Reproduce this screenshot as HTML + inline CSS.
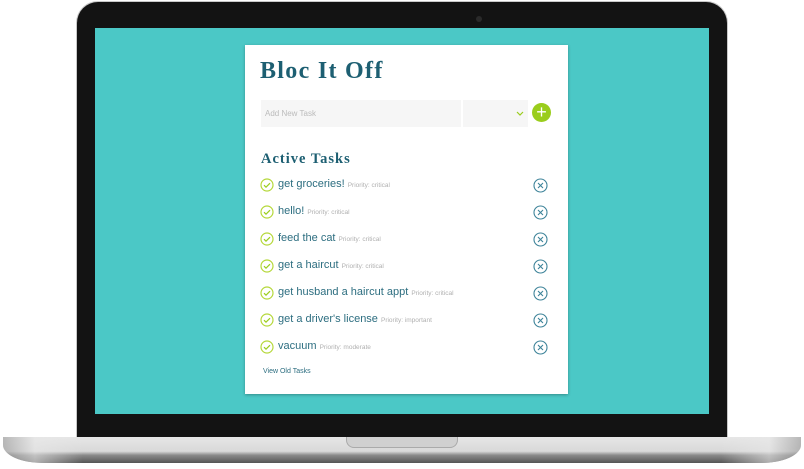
<!DOCTYPE html><html><head><style>
*{margin:0;padding:0;box-sizing:border-box}
body{width:804px;height:469px;background:#fff;position:relative;overflow:hidden;font-family:"Liberation Sans",sans-serif}
.bez{position:absolute;left:76px;top:1px;width:652px;height:440px;background:#131313;border-radius:22px 22px 0 0;border:1px solid #c8c8c8;border-bottom:none}
.scr{position:absolute;left:95px;top:28px;width:614px;height:386px;background:#4bc8c6}
.cam{position:absolute;left:399px;top:14px;width:6px;height:6px;border-radius:50%;background:#2a2a2a}
.base{position:absolute;left:3px;top:437px;width:798px;height:26px;border-radius:0 0 40px 40px/0 0 18px 18px;background:linear-gradient(#e6e6e6 0,#d9d9d9 55%,#8a8a8a 70%,#555 100%)}
.base:before{content:"";position:absolute;left:0;right:0;top:0;height:100%;border-radius:inherit;background:linear-gradient(90deg,#999 0,#e8e8e8 4%,transparent 10%,transparent 90%,#e8e8e8 96%,#999 100%);opacity:.6}
.notch{position:absolute;left:346px;top:437px;width:112px;height:11px;background:#d0d0d0;border-radius:0 0 8px 8px;border:1px solid #aaa;border-top:none}
.card{position:absolute;left:245px;top:45px;width:323px;height:349px;background:#fff;box-shadow:0 1px 3px rgba(0,0,0,.3)}
h1{position:absolute;left:15px;top:13px;font-family:"Liberation Serif",serif;font-size:24px;color:#1d5f72;font-weight:bold;letter-spacing:1.3px}
.in{position:absolute;left:16px;top:55px;width:200px;height:27px;background:#f6f6f6;font-size:8px;color:#bbb;padding:9px 4px}
.sel{position:absolute;left:218px;top:55px;width:65px;height:27px;background:#f6f6f6}
.sel svg{position:absolute;right:4px;top:11px}
.plus{position:absolute;left:287px;top:58px;width:19px;height:19px;border-radius:50%;background:#9acd1c;color:#fff;font-size:18px;line-height:18px;text-align:center}
h2{position:absolute;left:16px;top:106px;font-family:"Liberation Serif",serif;font-size:14.5px;color:#1d5f72;font-weight:bold;letter-spacing:1px}
.row{position:absolute;left:15px;height:16px;width:290px}
.row svg.c{position:absolute;left:0;top:1px}
.row .t{position:absolute;left:18px;top:1px;font-size:11px;color:#2d6e80;white-space:nowrap}
.row .t small{font-size:6.5px;color:#b0b0b0}
.row svg.x{position:absolute;left:273px;top:1px}
.old{position:absolute;left:18px;top:323px;font-size:7px;color:#2d6e80}
</style></head><body>
<div class="bez"><div class="cam"></div></div>
<div class="scr"></div>
<div class="base"></div><div class="notch"></div>
<div class="card">
<h1>Bloc It Off</h1>
<div class="in">Add New Task</div>
<div class="sel"><svg width="8" height="5"><path d="M1 1l3 3 3-3" fill="none" stroke="#9acd1c" stroke-width="1.2"/></svg></div>
<div class="plus">+</div>
<h2>Active Tasks</h2>
<div class="row" style="top:132px"><svg class="c" width="14" height="14"><circle cx="7" cy="7" r="6" fill="none" stroke="#b5d83a" stroke-width="1.2"/><path d="M4 7.2l2 2 4-4" fill="none" stroke="#9acd1c" stroke-width="1.2"/></svg><div class="t">get groceries! <small>Priority: critical</small></div><svg class="x" width="15" height="15"><circle cx="7.5" cy="7.5" r="6.5" fill="none" stroke="#3d8399" stroke-width="1.1"/><path d="M5 5l5 5M10 5l-5 5" stroke="#3d8399" stroke-width="1.1"/></svg></div>
<div class="row" style="top:159px"><svg class="c" width="14" height="14"><circle cx="7" cy="7" r="6" fill="none" stroke="#b5d83a" stroke-width="1.2"/><path d="M4 7.2l2 2 4-4" fill="none" stroke="#9acd1c" stroke-width="1.2"/></svg><div class="t">hello! <small>Priority: critical</small></div><svg class="x" width="15" height="15"><circle cx="7.5" cy="7.5" r="6.5" fill="none" stroke="#3d8399" stroke-width="1.1"/><path d="M5 5l5 5M10 5l-5 5" stroke="#3d8399" stroke-width="1.1"/></svg></div>
<div class="row" style="top:186px"><svg class="c" width="14" height="14"><circle cx="7" cy="7" r="6" fill="none" stroke="#b5d83a" stroke-width="1.2"/><path d="M4 7.2l2 2 4-4" fill="none" stroke="#9acd1c" stroke-width="1.2"/></svg><div class="t">feed the cat <small>Priority: critical</small></div><svg class="x" width="15" height="15"><circle cx="7.5" cy="7.5" r="6.5" fill="none" stroke="#3d8399" stroke-width="1.1"/><path d="M5 5l5 5M10 5l-5 5" stroke="#3d8399" stroke-width="1.1"/></svg></div>
<div class="row" style="top:213px"><svg class="c" width="14" height="14"><circle cx="7" cy="7" r="6" fill="none" stroke="#b5d83a" stroke-width="1.2"/><path d="M4 7.2l2 2 4-4" fill="none" stroke="#9acd1c" stroke-width="1.2"/></svg><div class="t">get a haircut <small>Priority: critical</small></div><svg class="x" width="15" height="15"><circle cx="7.5" cy="7.5" r="6.5" fill="none" stroke="#3d8399" stroke-width="1.1"/><path d="M5 5l5 5M10 5l-5 5" stroke="#3d8399" stroke-width="1.1"/></svg></div>
<div class="row" style="top:240px"><svg class="c" width="14" height="14"><circle cx="7" cy="7" r="6" fill="none" stroke="#b5d83a" stroke-width="1.2"/><path d="M4 7.2l2 2 4-4" fill="none" stroke="#9acd1c" stroke-width="1.2"/></svg><div class="t">get husband a haircut appt <small>Priority: critical</small></div><svg class="x" width="15" height="15"><circle cx="7.5" cy="7.5" r="6.5" fill="none" stroke="#3d8399" stroke-width="1.1"/><path d="M5 5l5 5M10 5l-5 5" stroke="#3d8399" stroke-width="1.1"/></svg></div>
<div class="row" style="top:267px"><svg class="c" width="14" height="14"><circle cx="7" cy="7" r="6" fill="none" stroke="#b5d83a" stroke-width="1.2"/><path d="M4 7.2l2 2 4-4" fill="none" stroke="#9acd1c" stroke-width="1.2"/></svg><div class="t">get a driver's license <small>Priority: important</small></div><svg class="x" width="15" height="15"><circle cx="7.5" cy="7.5" r="6.5" fill="none" stroke="#3d8399" stroke-width="1.1"/><path d="M5 5l5 5M10 5l-5 5" stroke="#3d8399" stroke-width="1.1"/></svg></div>
<div class="row" style="top:294px"><svg class="c" width="14" height="14"><circle cx="7" cy="7" r="6" fill="none" stroke="#b5d83a" stroke-width="1.2"/><path d="M4 7.2l2 2 4-4" fill="none" stroke="#9acd1c" stroke-width="1.2"/></svg><div class="t">vacuum <small>Priority: moderate</small></div><svg class="x" width="15" height="15"><circle cx="7.5" cy="7.5" r="6.5" fill="none" stroke="#3d8399" stroke-width="1.1"/><path d="M5 5l5 5M10 5l-5 5" stroke="#3d8399" stroke-width="1.1"/></svg></div>
<div class="old">View Old Tasks</div>
</div>
</body></html>
